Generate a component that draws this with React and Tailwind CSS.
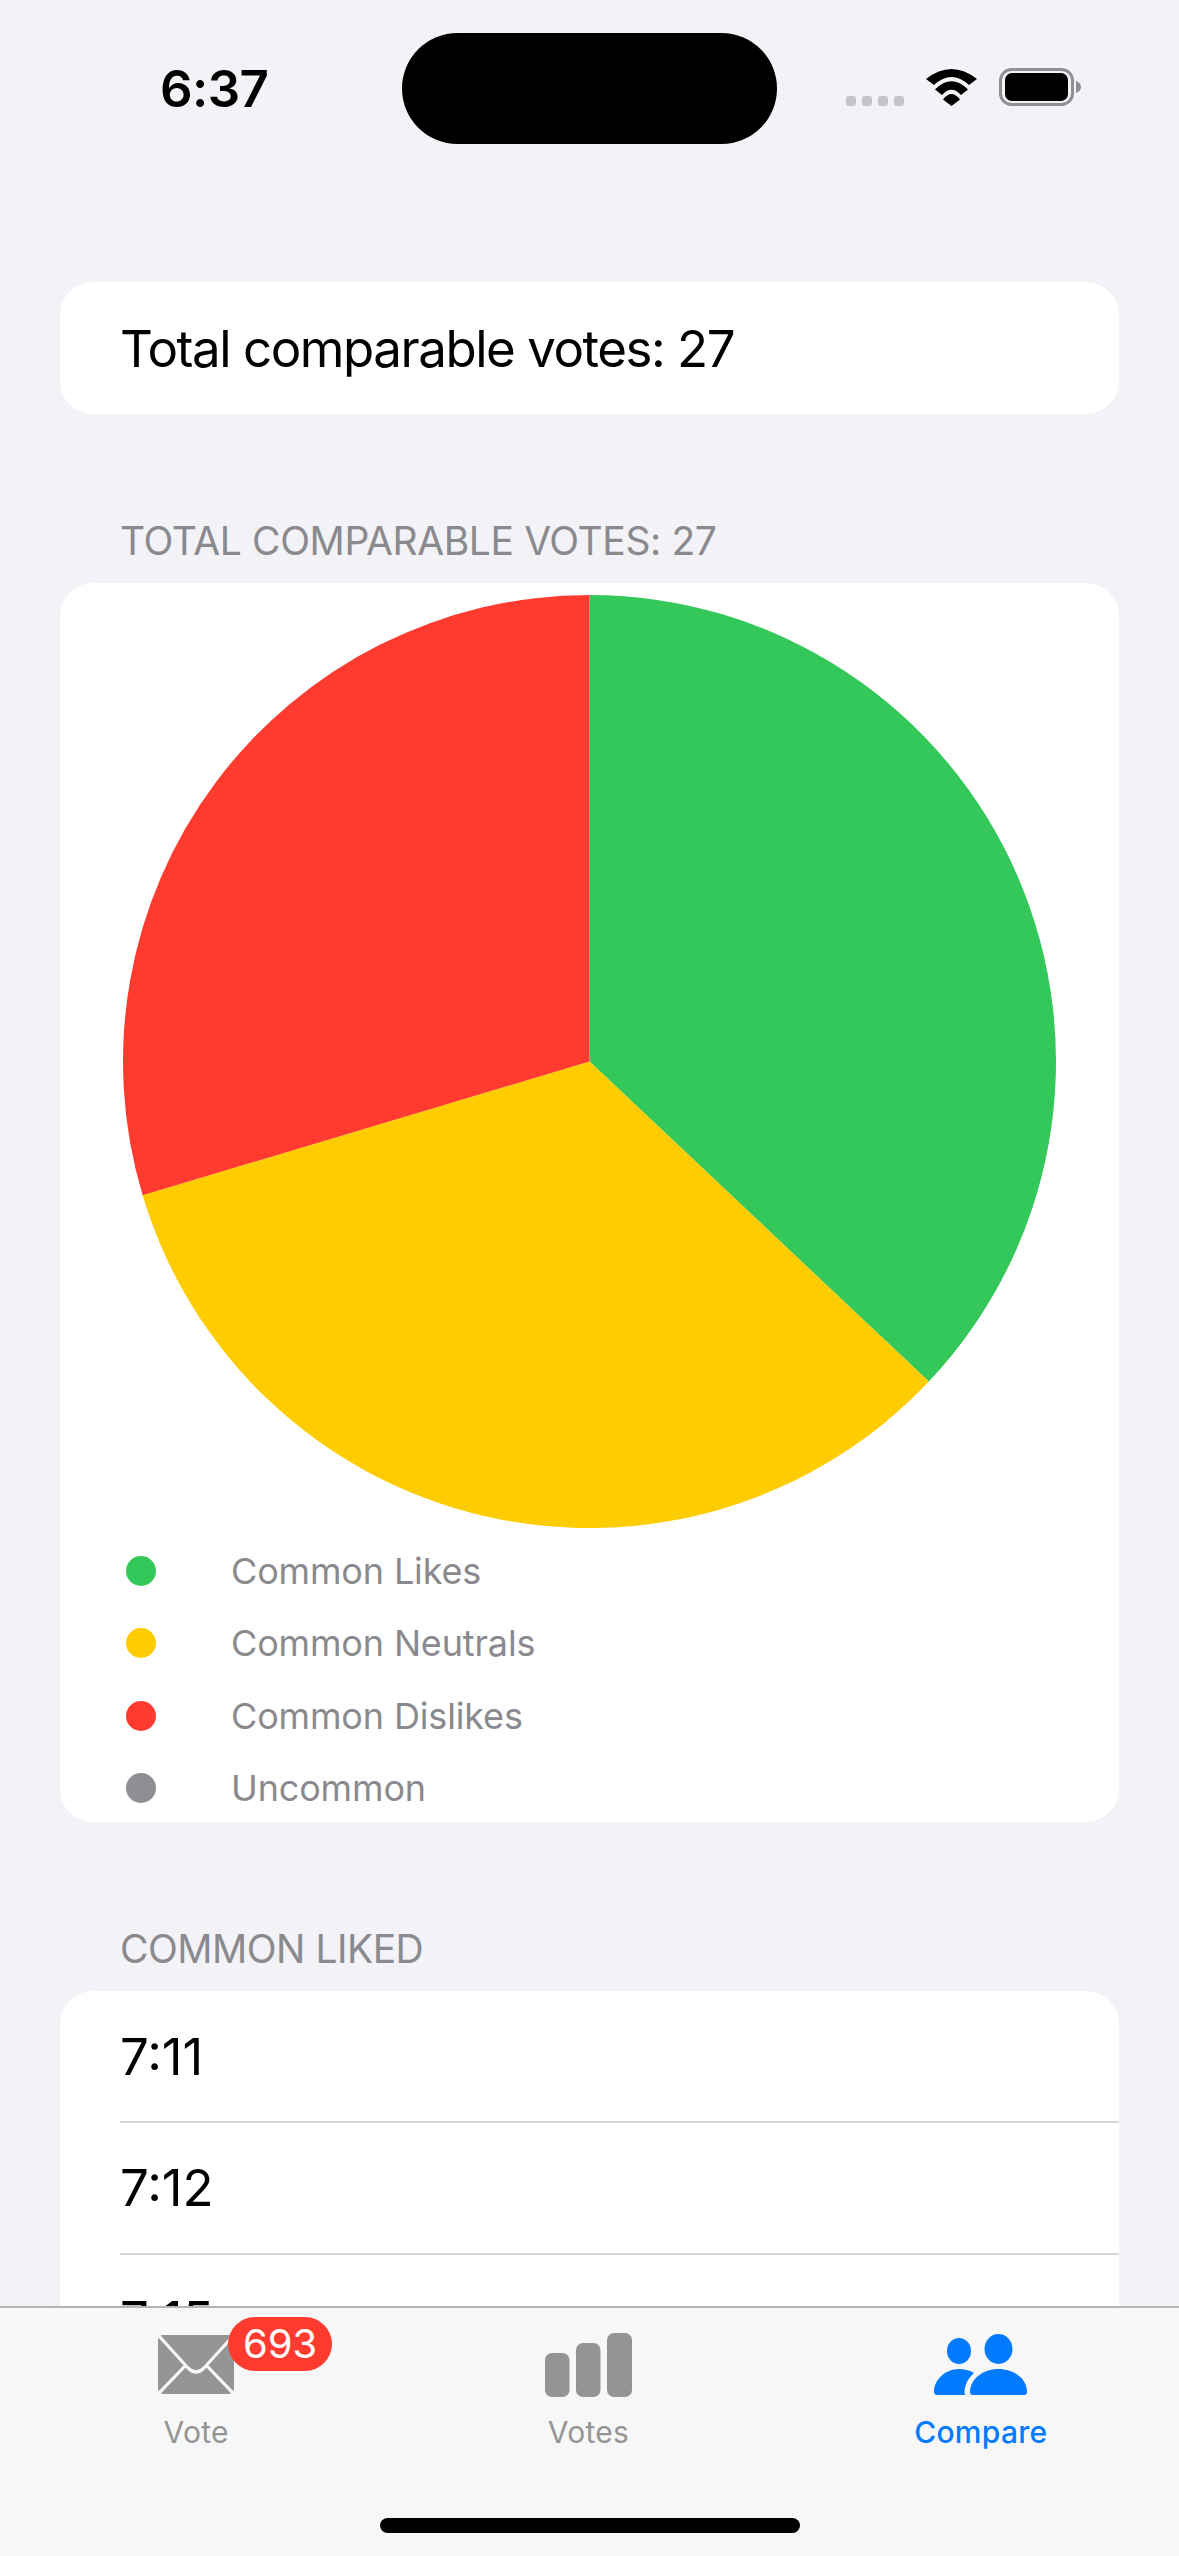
import React from "react";

const font = "font-['Inter','Noto_Sans',sans-serif]";

const legend = [
  { label: "Common Likes", dot: "bg-[#34c759]" },
  { label: "Common Neutrals", dot: "bg-[#ffcc00]" },
  { label: "Common Dislikes", dot: "bg-[#ff3b30]" },
  { label: "Uncommon", dot: "bg-[#8e8e93]" },
];

const rows = ["7:11", "7:12", "7:15"];

function slice(from, to) {
  const c = 466.5;
  const pt = (deg) => {
    const a = (deg * Math.PI) / 180;
    return `${c + c * Math.sin(a)} ${c - c * Math.cos(a)}`;
  };
  return `M${c} ${c} L${pt(from)} A${c} ${c} 0 0 1 ${pt(to)} Z`;
}

function Pie() {
  return (
    <svg width="933" height="933" viewBox="0 0 933 933" className="block mx-auto">
      <path d={slice(0, 133.33)} fill="#34c759" />
      <path d={slice(133.33, 253.33)} fill="#ffcc00" />
      <path d={slice(253.33, 360)} fill="#ff3b30" />
    </svg>
  );
}

function Wifi() {
  return (
    <svg width="51" height="37" viewBox="0 0 51 37">
      <path d="M0 10 Q25.5 -10 51 10 L43 16 Q25.5 0 8 16 Z" fill="#000" />
      <path d="M9 20.5 Q25.5 4 42 20.5 L35 26 Q25.5 15.4 16 26 Z" fill="#000" />
      <path d="M17 30.5 Q25.5 19.5 34 30.5 L25.5 37 Z" fill="#000" />
    </svg>
  );
}

function Battery() {
  return (
    <svg width="82" height="38" viewBox="0 0 82 38">
      <rect x="1.5" y="1.5" width="72" height="35" rx="11" fill="none" stroke="#8e8e93" strokeWidth="3" />
      <rect x="6" y="5" width="63" height="28" rx="7" fill="#000" />
      <path d="M77 13 C80 14 82 16 82 19 C82 22 80 24 77 25 Z" fill="#8e8e93" />
    </svg>
  );
}

function Envelope() {
  return (
    <svg width="76" height="59" viewBox="0 0 76 59">
      <rect width="76" height="59" rx="5" fill="#959595" />
      <path d="M1 1 L30 33 Q38 41 46 33 L75 1" fill="none" stroke="#f7f7f8" strokeWidth="3.2" />
      <path d="M1 58 L28 30 M75 58 L48 30" fill="none" stroke="#f7f7f8" strokeWidth="3.2" />
    </svg>
  );
}

function Bars() {
  return (
    <svg width="87" height="64" viewBox="0 0 87 64">
      <rect x="0" y="20" width="24.5" height="44" rx="7" fill="#949593" />
      <rect x="31" y="10" width="24.5" height="54" rx="7" fill="#949593" />
      <rect x="62" y="0" width="25" height="64" rx="7" fill="#949593" />
    </svg>
  );
}

function People() {
  return (
    <svg width="93" height="61" viewBox="0 0 93 61">
      <ellipse cx="25" cy="17" rx="12" ry="13" fill="#007aff" />
      <ellipse cx="64.5" cy="15" rx="14" ry="15" fill="#007aff" />
      <path d="M39 61 H90 Q93 61 93 58 C93 45 80 35 64.5 35 C49 35 36 45 36 58 Q36 61 39 61 Z" fill="#007aff" />
      <path d="M3 61 H31 C29.5 55 32 46 40 39 C35 36 30 35 25 35 C11 35 0 46 0 58 Q0 61 3 61 Z" fill="#007aff" />
    </svg>
  );
}

function Tab({ label, active, children }) {
  return (
    <div className="flex flex-col items-center">
      <div className="relative h-[67px] flex items-center justify-center">{children}</div>
      <div className={`mt-[16px] text-[30px] leading-[36px] tracking-[0.3px] ${active ? "text-[#007aff] font-medium" : "text-[#959595]"}`}>
        {label}
      </div>
    </div>
  );
}

export default function App() {
  return (
    <div className={`${font} w-[1179px] h-[2556px] bg-[#f2f2f7] flex flex-col overflow-hidden`}>
      {/* status bar */}
      <div className="shrink-0 flex pt-[33px]">
        <div className="w-[402px] h-[111px] flex items-center">
          <span className="ml-[160px] text-[51px] leading-[60px] font-semibold text-black tracking-[-0.6px]">6:37</span>
        </div>
        <div className="w-[375px] h-[111px] rounded-[56px] bg-black" />
        <div className="flex items-end gap-[22px] ml-[69px] pt-[35px] h-[73px]">
          <div className="flex gap-[6px] pb-0">
            {[0, 1, 2, 3].map((i) => (
              <div key={i} className="w-[10px] h-[10px] rounded-[3px] bg-[#c4c4c8]" />
            ))}
          </div>
          <Wifi />
          <Battery />
        </div>
      </div>

      {/* scrolling content */}
      <div className="flex-1 min-h-0 overflow-hidden px-[60px] pt-[138px]">
        <div className="h-[131.5px] rounded-[33px] bg-white flex items-center px-[60px] pt-[2px] text-[51px] tracking-[-1.46px] text-black">
          Total comparable votes: 27
        </div>

        <div className="mt-[104.5px] mb-[19px] px-[60px] text-[39px] leading-[46px] tracking-[-0.4px] text-[#8a8a8e]">
          TOTAL COMPARABLE VOTES: 27
        </div>
        <div className="rounded-[33px] bg-white pt-[12px] pb-[19px]">
          <Pie />
          <div className="mt-[28px] flex flex-col gap-[42.4px]">
            {legend.map((item) => (
              <div key={item.label} className="h-[30px] flex items-center pl-[66px]">
                <div className={`w-[30px] h-[30px] rounded-full ${item.dot}`} />
                <div className="ml-[75px] text-[36px] leading-[30px] tracking-[-0.15px] text-[#8a8a8e]">{item.label}</div>
              </div>
            ))}
          </div>
        </div>

        <div className="mt-[104px] mb-[19px] px-[60px] text-[39px] leading-[46px] tracking-[-0.5px] text-[#8a8a8e]">
          COMMON LIKED
        </div>
        <div className="rounded-t-[33px] bg-white">
          {rows.map((row) => (
            <div key={row} className="ml-[60px] h-[131.7px] flex items-center pt-[2px] border-b-[2px] border-[#d6d6d8] text-[51px] text-black">
              {row}
            </div>
          ))}
        </div>
      </div>

      {/* tab bar */}
      <div className="shrink-0 h-[250px] bg-gradient-to-r from-[#f6f8f9] to-[#f7f7f8] to-[25%] border-t-[2px] border-[#b4b4b6] pt-[23px] flex flex-col items-center">
        <div className="w-full grid grid-cols-3 h-[119px] pr-[2px]">
          <Tab label="Vote">
            <Envelope />
            <div className="absolute left-[70px] top-[-14px] h-[54px] w-[104px] rounded-full bg-[#ff3b30] flex items-center justify-center text-[40px] text-white">
              693
            </div>
          </Tab>
          <Tab label="Votes">
            <Bars />
          </Tab>
          <Tab label="Compare" active>
            <People />
          </Tab>
        </div>
        <div className="mt-[68px] w-[420px] h-[15px] rounded-full bg-black" />
      </div>
    </div>
  );
}
